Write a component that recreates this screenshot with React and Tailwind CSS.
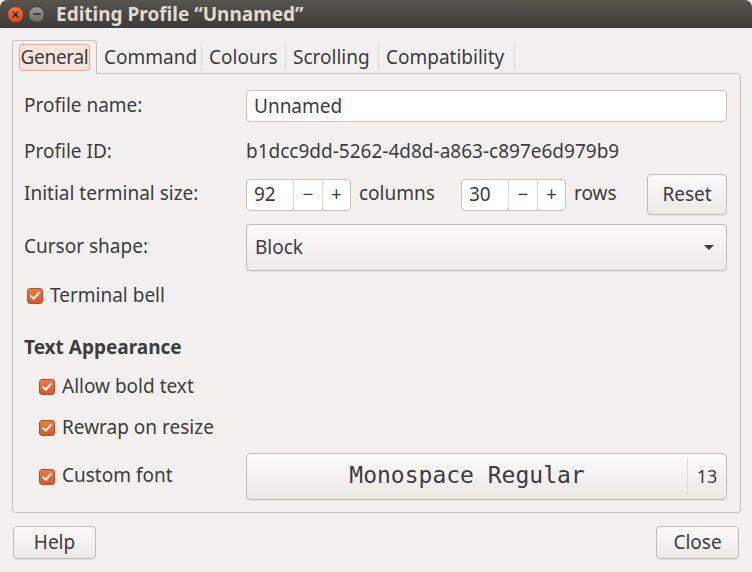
import React from "react";

const F = { fontFamily: '"Noto Sans", "DejaVu Sans", sans-serif' };

function Check() {
  return (
    <span className="inline-flex items-center justify-center w-[16px] h-[16px] rounded-[3px] border border-[#b8501f] bg-gradient-to-b from-[#f07a43] to-[#d9562a] shrink-0">
      <svg width="12" height="12" viewBox="0 0 12 12">
        <path d="M2.2 6.2 L4.8 8.8 L9.8 2.8" fill="none" stroke="#fff" strokeWidth="2" strokeLinecap="round" strokeLinejoin="round" />
      </svg>
    </span>
  );
}

function Spin({ value }) {
  return (
    <div className="flex h-[32px] w-[105px] rounded-[4px] border border-[#c7c4bf] bg-white overflow-hidden">
      <div className="w-[46px] flex items-center pl-[7px]">{value}</div>
      <div className="w-[29px] flex items-center justify-center border-l border-[#dcdad5]">−</div>
      <div className="flex-1 flex items-center justify-center border-l border-[#dcdad5]">+</div>
    </div>
  );
}

const btn =
  "flex items-center justify-center rounded-[4px] border border-[#bfbcb7] bg-gradient-to-b from-[#fbfbfa] to-[#ebe9e6] shadow-[0_1px_0_rgba(0,0,0,0.06)]";

export default function App() {
  return (
    <div style={F} className="w-[752px] h-[572px] bg-[#f2f1f0] text-[#3c3c3c] text-[19px] flex flex-col overflow-hidden">
      {/* title bar */}
      <div className="h-[28px] rounded-t-[7px] bg-gradient-to-b from-[#57554e] to-[#3c3b37] flex items-center shrink-0">
        <div className="ml-[7px] w-[17px] h-[17px] rounded-full bg-gradient-to-b from-[#f3764a] to-[#d9471c] border border-[#8f2e12] flex items-center justify-center">
          <svg width="9" height="9" viewBox="0 0 9 9">
            <path d="M2 2 L7 7 M7 2 L2 7" stroke="#3c1b0f" strokeWidth="1.6" strokeLinecap="round" />
          </svg>
        </div>
        <div className="ml-[4px] w-[17px] h-[17px] rounded-full bg-gradient-to-b from-[#9c9a94] to-[#6e6c66] border border-[#3a3935] flex items-center justify-center">
          <div className="w-[8px] h-[2px] bg-[#3c3b37] rounded" />
        </div>
        <div className="ml-[11px] text-[19px] font-bold text-[#dfdbd2] leading-none">
          Editing Profile “Unnamed”
        </div>
      </div>

      {/* tabs */}
      <div className="mt-[12px] ml-[12px] flex h-[33px] shrink-0 leading-none">
        <div className="relative w-[85px] h-[34px] rounded-t-[4px] border border-b-0 border-[#c7c4bf] bg-[#f2f1f0] z-10 flex items-start pt-[3px] pl-[6px]">
          <div className="h-[27px] w-[71px] rounded-[4px] border border-[#f2a58c] bg-[#f7e4dc] flex items-center justify-center tracking-[-0.3px]">General</div>
        </div>
        <div className="w-[105px] flex items-center pl-[7px] pt-[2px] border-r border-[#dcdad5] my-[2px]">Command</div>
        <div className="w-[84px] flex items-center pl-[7px] pt-[2px] border-r border-[#dcdad5] my-[2px]">Colours</div>
        <div className="w-[93px] flex items-center pl-[7px] pt-[2px] border-r border-[#dcdad5] my-[2px]">Scrolling</div>
        <div className="w-[136px] flex items-center pl-[7px] pt-[2px] border-r border-[#dcdad5] my-[2px]">Compatibility</div>
      </div>

      {/* frame */}
      <div className="ml-[12px] w-[729px] h-[440px] border border-[#c7c4bf] rounded-b-[3px] rounded-tr-[3px] pl-[11px] pr-[13px] flex flex-col shrink-0">
        <div className="mt-[16px] h-[32px] flex items-center">
          <div className="w-[222px] pb-[2px]">Profile name:</div>
          <div className="flex-1 h-[32px] rounded-[4px] border border-[#c7c4bf] bg-white flex items-center pl-[7px]">Unnamed</div>
        </div>
        <div className="mt-[14px] h-[32px] flex items-center pb-[2px]">
          <div className="w-[222px]">Profile ID:</div>
          <div>b1dcc9dd-5262-4d8d-a863-c897e6d979b9</div>
        </div>
        <div className="mt-[6px] h-[41px] flex items-center">
          <div className="w-[222px] pb-[2px]">Initial terminal size:</div>
          <Spin value="92" />
          <div className="ml-[8px] w-[102px] pb-[2px]">columns</div>
          <Spin value="30" />
          <div className="ml-[8px] pb-[2px]">rows</div>
          <div className="flex-1" />
          <div className={btn + " w-[80px] h-[41px]"}>Reset</div>
        </div>
        <div className="mt-[9px] h-[47px] flex items-center">
          <div className="w-[222px] pb-[2px]">Cursor shape:</div>
          <div className={btn + " flex-1 h-[47px] !justify-between pl-[8px] pr-[12px]"}>
            <span>Block</span>
            <svg width="10" height="6" viewBox="0 0 10 6">
              <path d="M0 0 L10 0 L5 5 Z" fill="#3c3c3c" />
            </svg>
          </div>
        </div>
        <div className="mt-[13px] h-[24px] flex items-center pl-[3px] gap-[7px]">
          <Check />
          <span className="pb-[2px]">Terminal bell</span>
        </div>
        <div className="mt-[28px] h-[24px] flex items-center font-bold pb-[2px]">Text Appearance</div>
        <div className="mt-[15px] h-[24px] flex items-center pl-[15px] gap-[7px]">
          <Check />
          <span className="pb-[2px]">Allow bold text</span>
        </div>
        <div className="mt-[17px] h-[24px] flex items-center pl-[15px] gap-[7px]">
          <Check />
          <span className="pb-[2px]">Rewrap on resize</span>
        </div>
        <div className="mt-[13px] h-[47px] flex items-center">
          <div className="w-[222px] flex items-center pl-[15px] gap-[7px]">
            <Check />
            <span className="pb-[2px]">Custom font</span>
          </div>
          <div className={btn + " flex-1 h-[47px] !justify-start"}>
            <div className="flex-1 text-center text-[23px] pb-[2px]" style={{ fontFamily: '"DejaVu Sans Mono", monospace' }}>
              Monospace Regular
            </div>
            <div className="w-[39px] h-[37px] border-l border-[#dcdad5] flex items-center justify-center text-[18px]">13</div>
          </div>
        </div>
      </div>

      {/* bottom buttons */}
      <div className="mt-[13px] mx-[13px] flex justify-between">
        <div className={btn + " w-[83px] h-[33px]"}>Help</div>
        <div className={btn + " w-[83px] h-[33px]"}>Close</div>
      </div>
    </div>
  );
}
